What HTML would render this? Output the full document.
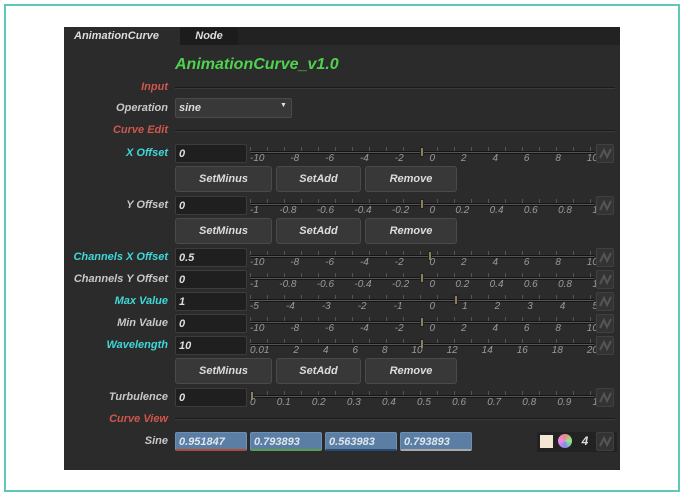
<!DOCTYPE html>
<html><head><style>
*{margin:0;padding:0;box-sizing:border-box}
body{width:686px;height:497px;background:#fff;position:relative;overflow:hidden;font-family:"Liberation Sans",sans-serif;font-style:italic;font-weight:bold}
.frame{position:absolute;left:4px;top:4px;width:676px;height:488px;border:2px solid #5ec9b9}
.panel{position:absolute;left:64px;top:27px;width:556px;height:443px;background:#2b2b2b}
.a{position:absolute}
.lbl{position:absolute;right:518px;font-size:11px;color:#c8c8c8;white-space:nowrap;line-height:14px}
.cy{color:#3fd8d8}.rd{color:#d0564c}
.fld{position:absolute;left:175px;width:72px;height:19px;background:#1f1f1f;border:1px solid #3c3c3c;border-radius:2px;color:#ddd;font-size:11px;padding:3px 0 0 3px}
.btn{position:absolute;height:26px;background:#383838;border:1px solid #4a4a4a;border-radius:3px;color:#ddd;font-size:11px;text-align:center;line-height:24px}
.sl{position:absolute;left:250px;width:344px;height:20px}
.sl .ln{position:absolute;left:0;right:0;top:7px;height:3px;border-top:1px solid #151515;border-bottom:1px solid #151515;background:#555}
.sl .tk{position:absolute;left:0;right:0;top:3px;height:4px;background:repeating-linear-gradient(90deg,#555 0 1px,transparent 1px 17px)}
.sl .lb{position:absolute;left:0;right:-4px;top:9px;display:flex;justify-content:space-between;font-size:10px;color:#9a9a9a;font-weight:normal;font-style:italic}
.sl .h{position:absolute;top:3px;width:4px;height:10px;background:#8a7f58;border:1px solid #222}
.ic{position:absolute;left:596px;width:18px;height:19px;background:#333;border:1px solid #404040;border-radius:2px}
.ic svg{position:absolute;left:2px;top:2px}
.sep{position:absolute;left:175px;width:440px;height:2px;border-top:1px solid #1a1a1a;border-bottom:1px solid #3a3a3a}
.v{position:absolute;top:432px;height:19px;background:#5a7ea4;border:1px solid #6d8fb5;border-radius:2px;color:#dfe6ee;font-size:11px;padding:3px 0 0 3px}
</style></head><body>
<div class="frame"></div>
<div class="panel"></div>
<div class="a" style="left:180px;top:27px;width:440px;height:18px;background:#222"></div>
<div class="a" style="left:64px;top:27px;width:116px;height:18px;background:#2b2b2b;color:#ddd;font-size:11px;padding:3px 0 0 10px">AnimationCurve</div>
<div class="a" style="left:180px;top:28px;width:58px;height:17px;background:#1c1c1c;color:#ddd;font-size:11px;text-align:center;line-height:17px;border-radius:2px 2px 0 0">Node</div>
<div class="a" style="left:175px;top:56px;font-size:16px;color:#4fd24f">AnimationCurve_v1.0</div>

<div class="lbl rd" style="top:80px">Input</div><div class="sep" style="top:87px"></div>
<div class="lbl" style="top:101px">Operation</div>
<div class="a" style="left:175px;top:98px;width:117px;height:20px;background:#383838;border:1px solid #4a4a4a;border-radius:2px;color:#ddd;font-size:11px;padding:3px 0 0 3px">sine<span style="position:absolute;left:104px;top:3px;font-size:7px;font-style:normal">▼</span></div>
<div class="lbl rd" style="top:123px">Curve Edit</div><div class="sep" style="top:130px"></div>

<div class="lbl cy" style="top:146px">X Offset</div><div class="fld" style="top:144px">0</div>
<div class="sl" style="top:144px"><div class="tk"></div><div class="ln"></div><div class="h" style="left:170px"></div><div class="lb"><span>-10</span><span>-8</span><span>-6</span><span>-4</span><span>-2</span><span>0</span><span>2</span><span>4</span><span>6</span><span>8</span><span>10</span></div></div><div class="ic" style="top:144px"><svg width="13" height="13"><path d="M1 11 L5 3 L8 10 L12 2" stroke="#555" stroke-width="2" fill="none"/></svg></div>
<div class="btn" style="left:175px;top:166px;width:97px">SetMinus</div><div class="btn" style="left:276px;top:166px;width:85px">SetAdd</div><div class="btn" style="left:365px;top:166px;width:92px">Remove</div>

<div class="lbl" style="top:198px">Y Offset</div><div class="fld" style="top:196px">0</div>
<div class="sl" style="top:196px"><div class="tk"></div><div class="ln"></div><div class="h" style="left:170px"></div><div class="lb"><span>-1</span><span>-0.8</span><span>-0.6</span><span>-0.4</span><span>-0.2</span><span>0</span><span>0.2</span><span>0.4</span><span>0.6</span><span>0.8</span><span>1</span></div></div><div class="ic" style="top:196px"><svg width="13" height="13"><path d="M1 11 L5 3 L8 10 L12 2" stroke="#555" stroke-width="2" fill="none"/></svg></div>
<div class="btn" style="left:175px;top:218px;width:97px">SetMinus</div><div class="btn" style="left:276px;top:218px;width:85px">SetAdd</div><div class="btn" style="left:365px;top:218px;width:92px">Remove</div>

<div class="lbl cy" style="top:250px">Channels X Offset</div><div class="fld" style="top:248px">0.5</div>
<div class="sl" style="top:248px"><div class="tk"></div><div class="ln"></div><div class="h" style="left:178px"></div><div class="lb"><span>-10</span><span>-8</span><span>-6</span><span>-4</span><span>-2</span><span>0</span><span>2</span><span>4</span><span>6</span><span>8</span><span>10</span></div></div><div class="ic" style="top:248px"><svg width="13" height="13"><path d="M1 11 L5 3 L8 10 L12 2" stroke="#555" stroke-width="2" fill="none"/></svg></div>

<div class="lbl" style="top:272px">Channels Y Offset</div><div class="fld" style="top:270px">0</div>
<div class="sl" style="top:270px"><div class="tk"></div><div class="ln"></div><div class="h" style="left:170px"></div><div class="lb"><span>-1</span><span>-0.8</span><span>-0.6</span><span>-0.4</span><span>-0.2</span><span>0</span><span>0.2</span><span>0.4</span><span>0.6</span><span>0.8</span><span>1</span></div></div><div class="ic" style="top:270px"><svg width="13" height="13"><path d="M1 11 L5 3 L8 10 L12 2" stroke="#555" stroke-width="2" fill="none"/></svg></div>

<div class="lbl cy" style="top:294px">Max Value</div><div class="fld" style="top:292px">1</div>
<div class="sl" style="top:292px"><div class="tk"></div><div class="ln"></div><div class="h" style="left:204px"></div><div class="lb"><span>-5</span><span>-4</span><span>-3</span><span>-2</span><span>-1</span><span>0</span><span>1</span><span>2</span><span>3</span><span>4</span><span>5</span></div></div><div class="ic" style="top:292px"><svg width="13" height="13"><path d="M1 11 L5 3 L8 10 L12 2" stroke="#555" stroke-width="2" fill="none"/></svg></div>

<div class="lbl" style="top:316px">Min Value</div><div class="fld" style="top:314px">0</div>
<div class="sl" style="top:314px"><div class="tk"></div><div class="ln"></div><div class="h" style="left:170px"></div><div class="lb"><span>-10</span><span>-8</span><span>-6</span><span>-4</span><span>-2</span><span>0</span><span>2</span><span>4</span><span>6</span><span>8</span><span>10</span></div></div><div class="ic" style="top:314px"><svg width="13" height="13"><path d="M1 11 L5 3 L8 10 L12 2" stroke="#555" stroke-width="2" fill="none"/></svg></div>

<div class="lbl cy" style="top:338px">Wavelength</div><div class="fld" style="top:336px">10</div>
<div class="sl" style="top:336px"><div class="tk"></div><div class="ln"></div><div class="h" style="left:170px"></div><div class="lb"><span>0.01</span><span>2</span><span>4</span><span>6</span><span>8</span><span>10</span><span>12</span><span>14</span><span>16</span><span>18</span><span>20</span></div></div><div class="ic" style="top:336px"><svg width="13" height="13"><path d="M1 11 L5 3 L8 10 L12 2" stroke="#555" stroke-width="2" fill="none"/></svg></div>
<div class="btn" style="left:175px;top:358px;width:97px">SetMinus</div><div class="btn" style="left:276px;top:358px;width:85px">SetAdd</div><div class="btn" style="left:365px;top:358px;width:92px">Remove</div>

<div class="lbl" style="top:390px">Turbulence</div><div class="fld" style="top:388px">0</div>
<div class="sl" style="top:388px"><div class="tk"></div><div class="ln"></div><div class="h" style="left:0px"></div><div class="lb"><span>0</span><span>0.1</span><span>0.2</span><span>0.3</span><span>0.4</span><span>0.5</span><span>0.6</span><span>0.7</span><span>0.8</span><span>0.9</span><span>1</span></div></div><div class="ic" style="top:388px"><svg width="13" height="13"><path d="M1 11 L5 3 L8 10 L12 2" stroke="#555" stroke-width="2" fill="none"/></svg></div>

<div class="lbl rd" style="top:412px">Curve View</div><div class="sep" style="top:418px"></div>
<div class="lbl" style="top:434px">Sine</div>
<div class="v" style="left:175px;width:72px;border-bottom:2px solid #b04a3a">0.951847</div>
<div class="v" style="left:250px;width:72px;border-bottom:2px solid #5aa04a">0.793893</div>
<div class="v" style="left:325px;width:72px;border-bottom:2px solid #2c4a70">0.563983</div>
<div class="v" style="left:400px;width:72px;border-bottom:2px solid #aaa">0.793893</div>
<div class="a" style="left:537px;top:432px;width:80px;height:20px;background:#222;border-radius:2px"></div>
<div class="a" style="left:540px;top:435px;width:13px;height:13px;background:#f5e6d3"></div>
<div class="a" style="left:558px;top:434px;width:14px;height:14px;border-radius:50%;background:conic-gradient(#e88,#8e8,#88e,#e8e,#e88)"></div>
<div class="a" style="left:576px;top:432px;width:18px;height:19px;color:#ddd;font-size:12px;text-align:center;line-height:19px">4</div>
<div class="ic" style="top:432px"><svg width="13" height="13"><path d="M1 11 L5 3 L8 10 L12 2" stroke="#555" stroke-width="2" fill="none"/></svg></div>
</body></html>
